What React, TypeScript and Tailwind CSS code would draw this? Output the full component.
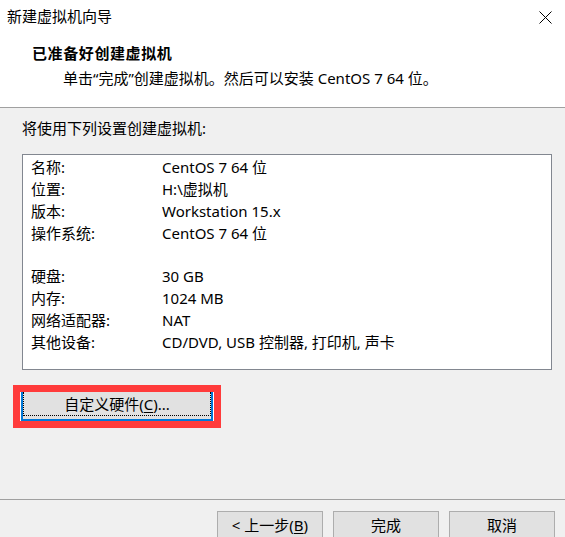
import React from "react";

const rows1: [string, string][] = [
  ["名称:", "CentOS 7 64 位"],
  ["位置:", "H:\\虚拟机"],
  ["版本:", "Workstation 15.x"],
  ["操作系统:", "CentOS 7 64 位"],
];
const rows2: [string, string][] = [
  ["硬盘:", "30 GB"],
  ["内存:", "1024 MB"],
  ["网络适配器:", "NAT"],
  ["其他设备:", "CD/DVD, USB 控制器, 打印机, 声卡"],
];

function Row({ l, v }: { l: string; v: string }) {
  return (
    <div className="flex h-[22px] items-center">
      <div className="w-[131px] shrink-0">{l}</div>
      <div>{v}</div>
    </div>
  );
}

function Btn({ children }: { children: React.ReactNode }) {
  return (
    <div className="flex h-[30px] w-[106px] items-center justify-center border border-[#adadad] bg-[#e1e1e1] pb-[3px]">
      {children}
    </div>
  );
}

export default function App() {
  return (
    <div className="relative flex h-[537px] w-[565px] flex-col overflow-hidden bg-[#f0f0f0] text-[15px] leading-[20px] text-black font-['Noto_Sans','Noto_Sans_CJK_SC',sans-serif]">
      {/* header */}
      <div className="relative h-[108px] shrink-0 border-b border-[#a0a0a0] bg-white">
        <div className="pl-[7px] pt-[6px]">新建虚拟机向导</div>
        <svg className="absolute left-[539px] top-[11px]" width="13" height="13" viewBox="0 0 13 13">
          <path d="M0.5 0.5 L12.5 12.5 M12.5 0.5 L0.5 12.5" stroke="#000" strokeWidth="1" />
        </svg>
        <div className="pl-[32px] pt-[17px] font-bold tracking-[0.6px]">已准备好创建虚拟机</div>
        <div className="pl-[63px] pt-[5px]">单击“完成”创建虚拟机。然后可以安装 CentOS 7 64 位。</div>
      </div>
      {/* body */}
      <div className="flex flex-1 flex-col">
        <div className="pl-[22px] pt-[10px]">将使用下列设置创建虚拟机:</div>
        <div className="ml-[22px] mt-[16px] h-[216px] w-[530px] border border-[#828790] bg-white pl-[8px] pt-[1px]">
          {rows1.map(([l, v]) => (
            <Row key={l} l={l} v={v} />
          ))}
          <div className="h-[21px]" />
          {rows2.map(([l, v]) => (
            <Row key={l} l={l} v={v} />
          ))}
        </div>
        <div className="ml-[13px] mt-[15px] h-[43px] w-[208px] border-[7px] border-[#ff3b3b] bg-white px-[1px]">
          <div className="flex h-full items-center justify-center border-x-2 border-b-2 border-[#0078d7] bg-[#e1e1e1] pb-[3px]">
            <div className="flex h-full w-full items-center justify-center border-x border-b border-dotted border-black">
              自定义硬件(<span className="underline underline-offset-2">C</span>)...
            </div>
          </div>
        </div>
      </div>
      {/* footer */}
      <div className="flex h-[38px] shrink-0 justify-end gap-[10px] border-t border-[#a0a0a0] pr-[10px] pt-[11px]">
        <Btn>
          &lt; 上一步(<span className="underline underline-offset-2">B</span>)
        </Btn>
        <Btn>完成</Btn>
        <Btn>取消</Btn>
      </div>
    </div>
  );
}
